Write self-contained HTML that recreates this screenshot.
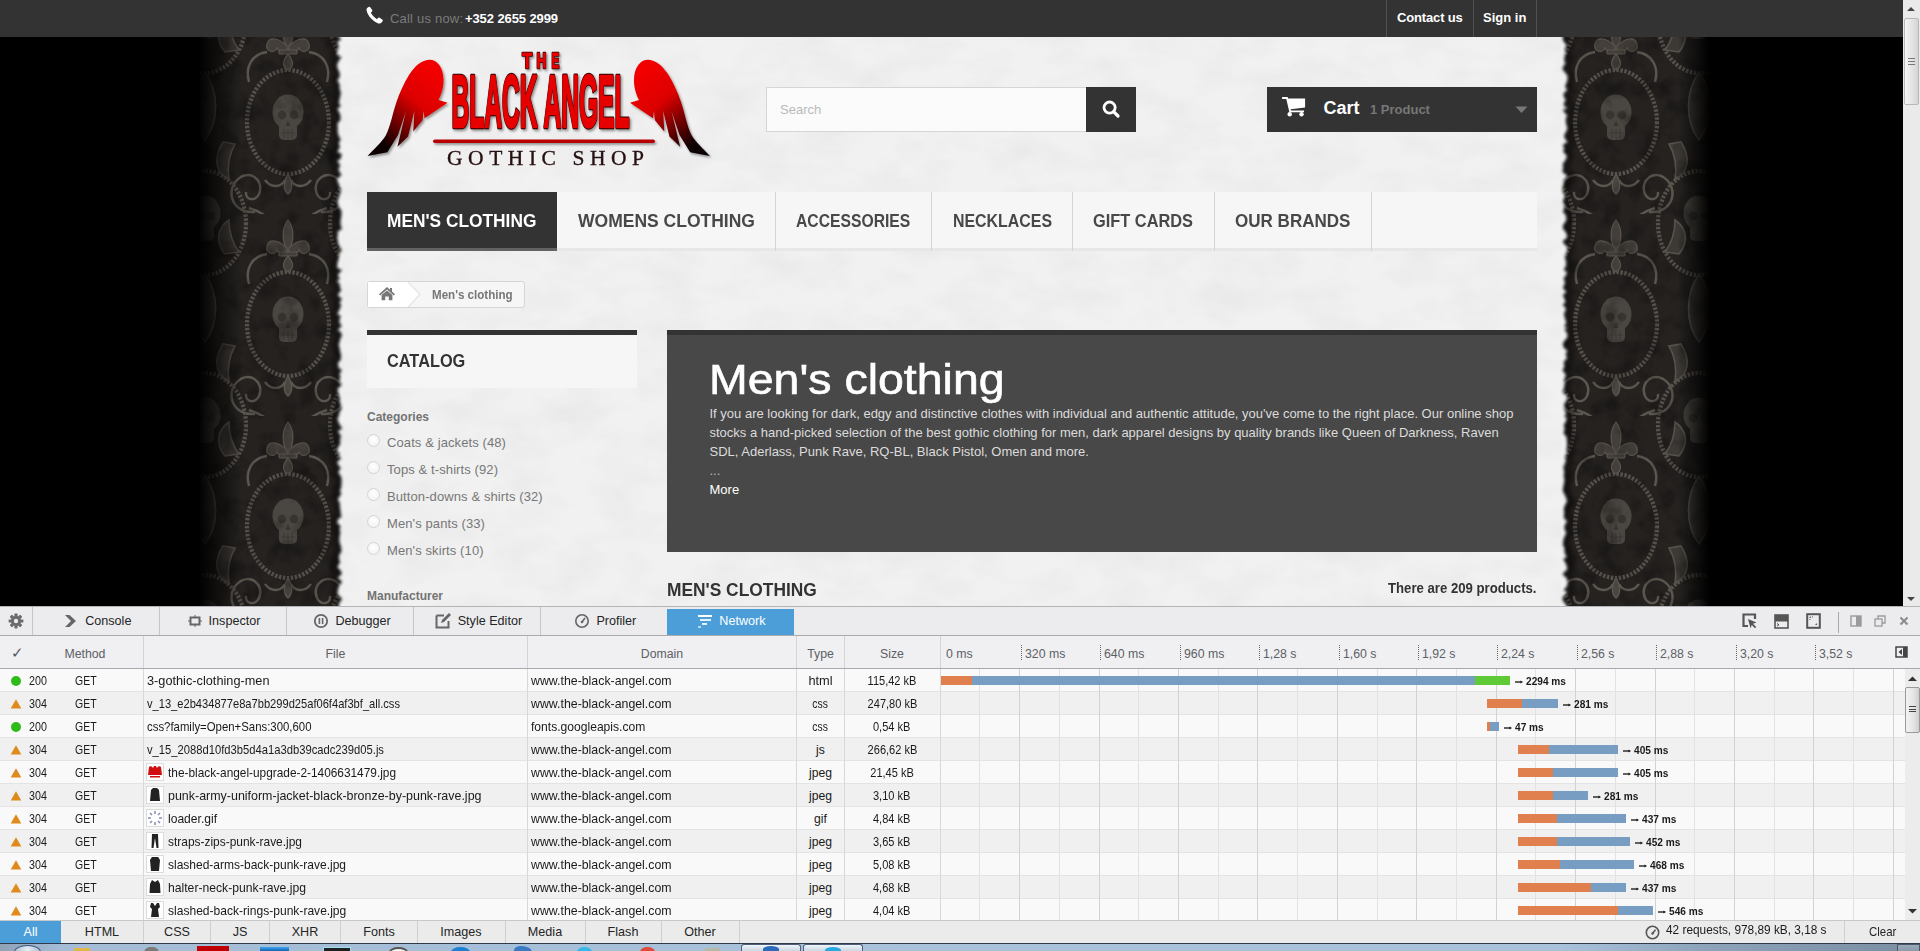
<!DOCTYPE html>
<html><head><meta charset="utf-8">
<style>
*{box-sizing:border-box;margin:0;padding:0}
html,body{width:1920px;height:951px;overflow:hidden;background:#000;font-family:"Liberation Sans",sans-serif}
.a{position:absolute;white-space:nowrap}
.l1{line-height:1}
.sx{display:inline-block;transform-origin:0 50%}
#page{position:absolute;left:0;top:0;width:1903px;height:606px;overflow:hidden;background:#000}
#topbar{position:absolute;left:0;top:0;width:1903px;height:37px;background:#333}
#topbar .sep{position:absolute;top:0;width:1px;height:37px;background:#515151}
#scroll1{position:absolute;left:1903px;top:0;width:17px;height:606px;background:#eaeaea}
#dev{position:absolute;left:0;top:607px;width:1920px;height:336px;background:#fcfcfc;overflow:hidden}
#taskbar{position:absolute;left:0;top:943px;width:1920px;height:8px;overflow:hidden}
.menu{position:absolute;top:192px;height:58px;background:#f6f6f6;border-bottom:3px solid #e9e9e9}
.mi{position:absolute;top:0;height:58px;border-right:1px solid #d6d4d4}
.mi span{position:absolute;top:14px;font-size:18px;font-weight:bold;color:#484848;line-height:18px}
.cat{position:absolute;left:387px;font-size:13px;color:#777;line-height:13px}
.radio{position:absolute;left:368px;width:12px;height:12px;border-radius:50%;background:#fafafa;border:1px solid #d8d8d8}
.desc{position:absolute;left:709px;font-size:13px;color:#d9d9d9;line-height:13px}
/* devtools */
.tb{position:absolute;top:0;height:29px;border-right:1px solid #cfcfcf;font-size:12.5px;color:#222;line-height:29px}
.hdr{position:absolute;font-size:12.5px;color:#5c6166;line-height:12px}
.row{position:absolute;left:0;width:1905px;height:23px;border-bottom:1px solid #e2e2e2}
.row.odd{background:#fafafa}
.row.even{background:#f0f0f0}
.t{position:absolute;font-size:12.5px;color:#1a1a1a;line-height:12px;top:6px}
.ft{position:absolute;top:0;height:22px;border-right:1px solid #d0d0d0;font-size:12.5px;color:#222;line-height:22px;text-align:center}

</style></head>
<body>
<div id="page"><svg class="a" style="left:0;top:0" width="1903" height="607" viewBox="0 0 1903 607">
<defs>
 <pattern id="dam" x="39" y="12" width="166" height="202" patternUnits="userSpaceOnUse">
  <rect width="166" height="202" fill="#252220"/>
  
<g id="mot">
 <!-- fleur-de-lis on top of ring -->
 <g fill="#443f3a" stroke="#58534c" stroke-width="1.2">
  <path d="M83 6 C77 14 76 26 83 38 C90 26 89 14 83 6 Z"/>
  <path d="M82 34 C74 26 64 24 62 32 C60 40 70 42 72 36 C74 40 78 40 82 38 Z"/>
  <path d="M84 34 C92 26 102 24 104 32 C106 40 96 42 94 36 C92 40 88 40 84 38 Z"/>
  <rect x="74" y="38" width="18" height="4" rx="1"/>
  <path d="M83 42 C78 48 76 54 83 58 C90 54 88 48 83 42 Z"/>
 </g>
 <!-- side scrolls -->
 <g fill="none" stroke="#5b564f" stroke-width="2.4">
  <path d="M50 200 C28 202 20 180 32 168 C44 156 60 168 54 182 C50 190 40 188 41 180"/>
  <path d="M116 200 C138 202 146 180 134 168 C122 156 106 168 112 182 C116 190 126 188 125 180"/>
  <path d="M60 206 C50 218 50 232 62 240 M106 206 C116 218 116 232 104 240"/>
  <path d="M62 40 C46 42 40 56 44 70 M104 40 C120 42 126 56 122 70"/>
  <path d="M44 196 C56 200 68 206 76 222 M122 196 C110 200 98 206 90 222" />
  <path d="M60 168 C66 176 76 176 80 168 M106 168 C100 176 90 176 86 168"/>
 </g>
 <!-- acanthus leaves between columns -->
 <g fill="#3d3935" stroke="#57524b" stroke-width="1.6">
  <path d="M0 60 C-14 80 -14 110 0 128 C14 110 14 80 0 60 Z"/>
  <path d="M166 60 C152 80 152 110 166 128 C180 110 180 80 166 60 Z"/>
  <path d="M0 262 C-14 282 -14 312 0 330 C14 312 14 282 0 262 Z" transform="translate(0,-202)"/>
  <path d="M18 130 C8 146 10 160 24 168 C22 154 24 142 30 132 Z"/>
  <path d="M148 130 C158 146 156 160 142 168 C144 154 142 142 136 132 Z"/>
  <path d="M20 40 C10 28 12 14 24 6 C24 20 28 30 34 38 Z"/>
  <path d="M146 40 C156 28 154 14 142 6 C142 20 138 30 132 38 Z"/>
 </g>
 <!-- rope rings -->
 <g fill="none" stroke="#56514b" stroke-width="4.2" stroke-dasharray="2.4 1.6">
  <ellipse cx="83" cy="110" rx="41" ry="52"/>
  <ellipse cx="0" cy="9" rx="41" ry="52"/><ellipse cx="166" cy="9" rx="41" ry="52"/>
  <ellipse cx="0" cy="211" rx="41" ry="52"/><ellipse cx="166" cy="211" rx="41" ry="52"/>
 </g>
 <g fill="#4a4640" stroke="#5f5a53" stroke-width="1.2">
  <path d="M83 162 C78 170 78 178 83 182 C88 178 88 170 83 162 Z"/>
 </g>
</g>
<g fill="#4a4641">
 <ellipse cx="83" cy="100" rx="15.5" ry="17.5"/><rect x="74" y="108" width="18" height="20" rx="5"/>
 <ellipse cx="0" cy="-1" rx="15.5" ry="17.5"/><rect x="-9" y="7" width="18" height="20" rx="5"/>
 <ellipse cx="166" cy="-1" rx="15.5" ry="17.5"/><rect x="157" y="7" width="18" height="20" rx="5"/>
 <ellipse cx="0" cy="201" rx="15.5" ry="17.5"/><rect x="-9" y="209" width="18" height="20" rx="5"/>
 <ellipse cx="166" cy="201" rx="15.5" ry="17.5"/><rect x="157" y="209" width="18" height="20" rx="5"/>
</g>
<g fill="#383531">
 <circle cx="77" cy="103" r="4.4"/><circle cx="89" cy="103" r="4.4"/><path d="M83 108 L80.5 114 H85.5 Z"/>
 <path d="M76 121 H90 M79 117 V127 M83 117 V127 M87 117 V127" stroke="#3a3733" stroke-width="1"/>
 <circle cx="-6" cy="2" r="4.4"/><circle cx="6" cy="2" r="4.4"/>
 <circle cx="160" cy="2" r="4.4"/><circle cx="172" cy="2" r="4.4"/>
 <circle cx="-6" cy="204" r="4.4"/><circle cx="6" cy="204" r="4.4"/>
 <circle cx="160" cy="204" r="4.4"/><circle cx="172" cy="204" r="4.4"/>
</g>

 </pattern>
 <linearGradient id="fl" x1="0" x2="1"><stop offset="0" stop-color="#000" stop-opacity="1"/><stop offset="1" stop-color="#000" stop-opacity="0"/></linearGradient>
 <linearGradient id="fr" x1="0" x2="1"><stop offset="0" stop-color="#000" stop-opacity="0"/><stop offset="1" stop-color="#000" stop-opacity="1"/></linearGradient>
 <filter id="blur1" x="-5%" y="-5%" width="110%" height="110%"><feGaussianBlur stdDeviation="1.6"/></filter>
 <filter id="blur2" x="-5%" y="-5%" width="110%" height="110%"><feGaussianBlur stdDeviation="2"/></filter>
 <filter id="grunge" x="0" y="0" width="100%" height="100%">
  <feTurbulence type="fractalNoise" baseFrequency="0.05" numOctaves="3" seed="11"/>
  <feColorMatrix values="0 0 0 0 0  0 0 0 0 0  0 0 0 0 0  0 0 0 -2.2 1.2"/>
 </filter>
 <filter id="tex" x="0" y="0" width="100%" height="100%">
  <feTurbulence type="fractalNoise" baseFrequency="0.02 0.035" numOctaves="4" seed="3"/>
  <feColorMatrix values="0 0 0 0 0  0 0 0 0 0  0 0 0 0 0  0 0 0 -1.6 1.05"/>
 </filter>
</defs>
<rect width="1903" height="607" fill="#000"/>
<rect x="180" y="0" width="170" height="607" fill="url(#dam)"/>
<rect x="1555" y="0" width="170" height="607" fill="url(#dam)"/>
<rect x="180" y="0" width="170" height="607" fill="#000" filter="url(#grunge)" opacity="0.35"/>
<rect x="1555" y="0" width="170" height="607" fill="#000" filter="url(#grunge)" opacity="0.35"/>
<rect x="178" y="0" width="22" height="607" fill="#000"/>
<rect x="198" y="0" width="44" height="607" fill="url(#fl)"/>
<rect x="1678" y="0" width="32" height="607" fill="url(#fr)"/>
<rect x="1710" y="0" width="30" height="607" fill="#000"/>
<polygon points="338.6,30 339.0,33 337.3,35 338.8,37 341.6,39 337.1,42 339.1,47 337.4,50 337.2,55 341.8,57 339.9,59 337.2,64 337.1,67 338.4,70 339.7,73 339.8,77 337.4,80 338.8,83 339.8,85 339.5,88 340.9,93 339.9,98 338.8,103 341.0,106 337.3,109 339.6,113 340.7,117 340.1,121 337.5,123 337.8,128 337.7,132 339.1,137 340.9,139 338.7,143 340.0,147 337.3,152 341.8,154 340.5,159 337.2,161 340.3,165 338.4,170 341.5,175 337.0,179 338.7,184 339.5,186 340.9,189 340.7,192 338.9,197 337.3,202 339.0,207 341.5,211 341.4,216 340.6,220 340.5,224 341.9,229 337.3,232 338.1,235 337.0,238 338.3,241 337.7,243 340.1,247 341.9,251 339.3,253 339.0,258 337.4,263 337.2,268 342.0,270 337.7,275 340.0,279 336.9,281 339.7,284 340.1,288 341.4,290 337.7,295 341.9,299 339.4,303 341.3,305 339.4,310 337.3,314 340.8,316 339.4,320 339.6,323 341.8,326 337.7,330 340.8,332 342.0,336 340.5,338 339.6,342 338.7,345 339.7,348 340.2,352 341.1,355 340.7,360 337.9,363 338.7,368 342.0,370 339.4,374 340.5,377 339.2,381 341.9,385 337.3,389 338.1,391 338.7,394 340.1,399 339.4,401 341.1,405 341.2,407 341.6,409 339.4,412 339.2,415 337.4,419 339.3,424 340.7,426 342.1,429 337.7,431 341.1,436 340.1,439 340.3,444 337.7,448 337.0,451 339.6,453 339.2,456 341.2,459 337.0,462 338.4,465 340.9,468 338.2,472 341.2,477 341.6,479 341.6,483 341.2,488 339.7,491 341.4,493 340.1,496 337.8,499 340.1,504 339.8,506 340.4,510 341.0,515 341.5,517 338.2,519 337.1,523 339.5,525 340.9,527 339.2,529 340.5,532 339.5,537 339.5,542 340.5,545 341.7,549 341.3,552 339.1,555 339.2,560 340.4,562 337.3,567 341.0,571 341.8,574 337.6,578 341.9,581 340.8,584 339.0,586 337.7,591 337.7,594 342.1,599 338.7,604 338.8,607 340.7,609 338.7,611 339.2,616 338.9,618 339.6,620 1565.1,620 1562.9,619 1566.0,617 1565.1,612 1567.4,608 1565.8,604 1563.6,602 1562.4,599 1562.8,597 1567.3,592 1563.2,590 1566.5,587 1567.5,584 1567.2,579 1562.4,574 1567.4,569 1566.1,564 1563.1,559 1566.8,557 1564.6,553 1564.4,548 1562.9,545 1563.1,542 1563.8,538 1566.3,533 1564.4,529 1564.4,526 1567.0,521 1563.7,518 1564.1,514 1564.2,512 1563.7,509 1564.6,506 1567.1,501 1565.3,496 1562.8,491 1563.0,488 1564.0,483 1564.5,480 1563.7,476 1564.2,472 1563.3,467 1564.9,464 1565.8,460 1564.7,457 1567.3,452 1566.1,450 1567.1,447 1567.0,442 1566.5,437 1563.4,433 1564.7,429 1563.7,425 1565.7,422 1566.7,418 1563.9,416 1566.3,414 1564.3,409 1564.4,407 1563.7,405 1566.1,401 1567.3,398 1566.8,396 1562.4,392 1564.0,388 1564.6,383 1564.0,380 1565.9,375 1562.4,370 1564.4,367 1563.6,362 1567.0,358 1565.5,354 1567.4,351 1563.1,347 1562.8,345 1563.5,342 1567.6,337 1566.7,332 1563.9,330 1567.3,328 1564.0,326 1566.4,323 1564.8,318 1563.9,314 1566.0,309 1564.9,307 1562.5,305 1565.6,302 1564.1,298 1562.8,295 1566.4,292 1562.8,288 1565.0,283 1563.6,278 1566.2,275 1566.8,272 1563.7,270 1566.3,265 1565.8,263 1566.3,261 1564.8,259 1564.9,257 1565.7,254 1566.7,252 1567.4,247 1563.1,243 1562.8,241 1566.7,238 1567.1,236 1566.2,233 1562.6,228 1563.2,225 1566.4,220 1565.8,215 1562.8,212 1564.0,209 1564.4,205 1563.1,203 1562.9,201 1563.7,199 1565.0,196 1562.8,192 1562.4,187 1563.5,184 1563.7,180 1567.4,176 1562.4,172 1563.2,167 1562.6,164 1565.5,160 1566.9,156 1562.8,151 1564.6,149 1562.5,145 1567.5,142 1564.5,138 1564.2,135 1566.0,132 1567.4,128 1565.8,123 1565.8,118 1567.3,116 1565.1,113 1562.5,110 1567.6,108 1563.8,106 1563.9,103 1565.7,100 1563.4,96 1563.8,93 1567.3,90 1565.1,87 1565.6,85 1567.2,81 1567.6,76 1564.8,72 1562.7,70 1562.8,67 1565.7,63 1563.8,61 1564.6,59 1563.9,56 1566.0,54 1564.5,49 1566.7,45 1563.8,42 1562.6,39 1562.8,35 1567.5,33 1562.7,30" fill="none" stroke="#000" stroke-width="14" opacity="0.35" filter="url(#blur2)"/>
<polygon points="338.6,30 339.0,33 337.3,35 338.8,37 341.6,39 337.1,42 339.1,47 337.4,50 337.2,55 341.8,57 339.9,59 337.2,64 337.1,67 338.4,70 339.7,73 339.8,77 337.4,80 338.8,83 339.8,85 339.5,88 340.9,93 339.9,98 338.8,103 341.0,106 337.3,109 339.6,113 340.7,117 340.1,121 337.5,123 337.8,128 337.7,132 339.1,137 340.9,139 338.7,143 340.0,147 337.3,152 341.8,154 340.5,159 337.2,161 340.3,165 338.4,170 341.5,175 337.0,179 338.7,184 339.5,186 340.9,189 340.7,192 338.9,197 337.3,202 339.0,207 341.5,211 341.4,216 340.6,220 340.5,224 341.9,229 337.3,232 338.1,235 337.0,238 338.3,241 337.7,243 340.1,247 341.9,251 339.3,253 339.0,258 337.4,263 337.2,268 342.0,270 337.7,275 340.0,279 336.9,281 339.7,284 340.1,288 341.4,290 337.7,295 341.9,299 339.4,303 341.3,305 339.4,310 337.3,314 340.8,316 339.4,320 339.6,323 341.8,326 337.7,330 340.8,332 342.0,336 340.5,338 339.6,342 338.7,345 339.7,348 340.2,352 341.1,355 340.7,360 337.9,363 338.7,368 342.0,370 339.4,374 340.5,377 339.2,381 341.9,385 337.3,389 338.1,391 338.7,394 340.1,399 339.4,401 341.1,405 341.2,407 341.6,409 339.4,412 339.2,415 337.4,419 339.3,424 340.7,426 342.1,429 337.7,431 341.1,436 340.1,439 340.3,444 337.7,448 337.0,451 339.6,453 339.2,456 341.2,459 337.0,462 338.4,465 340.9,468 338.2,472 341.2,477 341.6,479 341.6,483 341.2,488 339.7,491 341.4,493 340.1,496 337.8,499 340.1,504 339.8,506 340.4,510 341.0,515 341.5,517 338.2,519 337.1,523 339.5,525 340.9,527 339.2,529 340.5,532 339.5,537 339.5,542 340.5,545 341.7,549 341.3,552 339.1,555 339.2,560 340.4,562 337.3,567 341.0,571 341.8,574 337.6,578 341.9,581 340.8,584 339.0,586 337.7,591 337.7,594 342.1,599 338.7,604 338.8,607 340.7,609 338.7,611 339.2,616 338.9,618 339.6,620 1565.1,620 1562.9,619 1566.0,617 1565.1,612 1567.4,608 1565.8,604 1563.6,602 1562.4,599 1562.8,597 1567.3,592 1563.2,590 1566.5,587 1567.5,584 1567.2,579 1562.4,574 1567.4,569 1566.1,564 1563.1,559 1566.8,557 1564.6,553 1564.4,548 1562.9,545 1563.1,542 1563.8,538 1566.3,533 1564.4,529 1564.4,526 1567.0,521 1563.7,518 1564.1,514 1564.2,512 1563.7,509 1564.6,506 1567.1,501 1565.3,496 1562.8,491 1563.0,488 1564.0,483 1564.5,480 1563.7,476 1564.2,472 1563.3,467 1564.9,464 1565.8,460 1564.7,457 1567.3,452 1566.1,450 1567.1,447 1567.0,442 1566.5,437 1563.4,433 1564.7,429 1563.7,425 1565.7,422 1566.7,418 1563.9,416 1566.3,414 1564.3,409 1564.4,407 1563.7,405 1566.1,401 1567.3,398 1566.8,396 1562.4,392 1564.0,388 1564.6,383 1564.0,380 1565.9,375 1562.4,370 1564.4,367 1563.6,362 1567.0,358 1565.5,354 1567.4,351 1563.1,347 1562.8,345 1563.5,342 1567.6,337 1566.7,332 1563.9,330 1567.3,328 1564.0,326 1566.4,323 1564.8,318 1563.9,314 1566.0,309 1564.9,307 1562.5,305 1565.6,302 1564.1,298 1562.8,295 1566.4,292 1562.8,288 1565.0,283 1563.6,278 1566.2,275 1566.8,272 1563.7,270 1566.3,265 1565.8,263 1566.3,261 1564.8,259 1564.9,257 1565.7,254 1566.7,252 1567.4,247 1563.1,243 1562.8,241 1566.7,238 1567.1,236 1566.2,233 1562.6,228 1563.2,225 1566.4,220 1565.8,215 1562.8,212 1564.0,209 1564.4,205 1563.1,203 1562.9,201 1563.7,199 1565.0,196 1562.8,192 1562.4,187 1563.5,184 1563.7,180 1567.4,176 1562.4,172 1563.2,167 1562.6,164 1565.5,160 1566.9,156 1562.8,151 1564.6,149 1562.5,145 1567.5,142 1564.5,138 1564.2,135 1566.0,132 1567.4,128 1565.8,123 1565.8,118 1567.3,116 1565.1,113 1562.5,110 1567.6,108 1563.8,106 1563.9,103 1565.7,100 1563.4,96 1563.8,93 1567.3,90 1565.1,87 1565.6,85 1567.2,81 1567.6,76 1564.8,72 1562.7,70 1562.8,67 1565.7,63 1563.8,61 1564.6,59 1563.9,56 1566.0,54 1564.5,49 1566.7,45 1563.8,42 1562.6,39 1562.8,35 1567.5,33 1562.7,30" fill="#f1f1f1" filter="url(#blur1)"/>
<rect x="342" y="37" width="1219" height="569" fill="#000" filter="url(#tex)" opacity="0.032"/>
</svg><div id="topbar"><div class="sep" style="left:1386px"></div><div class="sep" style="left:1473px"></div><div class="sep" style="left:1536px"></div></div><svg class="a" style="left:365px;top:5px" width="20" height="20" viewBox="0 0 20 20">
<path d="M3.2 2.2 C2 2.8 1.3 4 1.6 5.6 C2.6 10.6 7.6 16.2 12.8 18.2 C14.4 18.8 15.8 18.3 16.8 17.2 L17.6 16.2 C18 15.6 17.8 15 17.2 14.6 L14.6 12.8 C14 12.4 13.3 12.6 12.9 13.1 L12 14.2 C9.4 12.8 7 10.2 5.8 7.6 L6.9 6.8 C7.4 6.4 7.5 5.7 7.2 5.1 L5.4 2.4 C5 1.9 4.3 1.7 3.8 2 Z" fill="#fff"/>
</svg><div class="a " style="left:390px;top:11.59px;font-size:13px;line-height:13px;color:#7b7b7b;font-weight:normal;letter-spacing:0.2px">Call us now:</div><div class="a " style="left:465px;top:11.59px;font-size:13px;line-height:13px;color:#fff;font-weight:bold;letter-spacing:-0.1px">+352 2655 2999</div><div class="a " style="left:1397px;top:10.99px;font-size:13px;line-height:13px;color:#fff;font-weight:bold;letter-spacing:-0.15px">Contact us</div><div class="a " style="left:1483px;top:10.99px;font-size:13px;line-height:13px;color:#fff;font-weight:bold;">Sign in</div><svg class="a" style="left:360px;top:45px" width="360" height="130" viewBox="0 0 360 130">
<defs>
 <linearGradient id="wg" x1="78" y1="22" x2="14" y2="98" gradientUnits="userSpaceOnUse">
  <stop offset="0" stop-color="#f20000"/><stop offset="0.35" stop-color="#dc0000"/><stop offset="0.72" stop-color="#4a0000"/><stop offset="0.9" stop-color="#080000"/>
 </linearGradient>
 <filter id="tsh" x="-10%" y="-10%" width="130%" height="130%"><feDropShadow dx="1.5" dy="1.8" stdDeviation="1.1" flood-color="#000" flood-opacity="0.4"/></filter>
 <path id="wing" d="M5.5 101.1 C12 94 20 87 24 80 C28.5 71 31 57 34.5 47 C37.5 38 42 28 47 20 C53 11 59 5.5 67 4.8 C75 4.5 81 12 81.5 24 C81.8 33 79 40 76.5 45 L85.5 47.8 L62.5 63.3 L61.6 55.7 L60.6 65.2 L51.2 76.5 L52.4 55.7 L46.1 81.6 L35.4 91.7 L43.9 56.4 L36 80 L25.3 97.3 Z"/>
</defs>
<g filter="url(#tsh)">
 <use href="#wing" transform="translate(2,10)" fill="url(#wg)"/>
 <use href="#wing" transform="translate(355.5,10) scale(-1,1)" fill="url(#wg)"/>
 <g font-family="Liberation Sans" font-weight="bold">
 <text x="162.3" y="22.6" font-size="21.5" fill="#e60000" stroke="#2a0000" stroke-width="2.6" stroke-linejoin="round" textLength="9.8" lengthAdjust="spacingAndGlyphs">T</text>
 <text x="176.6" y="22.6" font-size="21.5" fill="#e60000" stroke="#2a0000" stroke-width="2.6" stroke-linejoin="round" textLength="9.8" lengthAdjust="spacingAndGlyphs">H</text>
 <text x="191.5" y="22.6" font-size="21.5" fill="#e60000" stroke="#2a0000" stroke-width="2.6" stroke-linejoin="round" textLength="7.8" lengthAdjust="spacingAndGlyphs">E</text>
 <text x="162.3" y="22.6" font-size="21.5" fill="#e60000" stroke="#e60000" stroke-width="1.1" stroke-linejoin="round" textLength="9.8" lengthAdjust="spacingAndGlyphs">T</text>
 <text x="176.6" y="22.6" font-size="21.5" fill="#e60000" stroke="#e60000" stroke-width="1.1" stroke-linejoin="round" textLength="9.8" lengthAdjust="spacingAndGlyphs">H</text>
 <text x="191.5" y="22.6" font-size="21.5" fill="#e60000" stroke="#e60000" stroke-width="1.1" stroke-linejoin="round" textLength="7.8" lengthAdjust="spacingAndGlyphs">E</text>
 <text x="91.5" y="82" font-size="75" fill="#e60000" stroke="#2a0000" stroke-width="4.6" stroke-linejoin="round" textLength="178" lengthAdjust="spacingAndGlyphs">BLACK ANGEL</text>
 <text x="91.5" y="82" font-size="75" fill="#e60000" stroke="#e60000" stroke-width="2.6" stroke-linejoin="round" textLength="178" lengthAdjust="spacingAndGlyphs">BLACK ANGEL</text>
 </g>
 <rect x="73" y="94.5" width="222" height="3.6" rx="1.8" fill="#b80000"/>
</g>
<text x="87" y="120" font-family="Liberation Serif" font-size="21.5" fill="#261010" stroke="#261010" stroke-width="0.35" textLength="197" lengthAdjust="spacing">GOTHIC SHOP</text>
</svg>
<div class="a" style="left:766px;top:87px;width:320px;height:45px;background:#fbfbfb;border:1px solid #d6d4d4;border-right:0"></div><div class="a " style="left:780px;top:103.19px;font-size:13px;line-height:13px;color:#b9b9b9;font-weight:normal;">Search</div><div class="a" style="left:1086px;top:87px;width:50px;height:45px;background:#333;"></div><svg class="a" style="left:1101px;top:99px" width="20" height="20" viewBox="0 0 20 20">
<circle cx="8.6" cy="8.6" r="5.6" fill="none" stroke="#fff" stroke-width="2.8"/>
<path d="M12.6 12.6 L17 17" stroke="#fff" stroke-width="3.2" stroke-linecap="round"/>
</svg><div class="a" style="left:1267px;top:87px;width:270px;height:45px;background:#333;"></div><svg class="a" style="left:1281px;top:96px" width="26" height="22" viewBox="0 0 26 22">
<path d="M1.1 1 H6.6 L7.2 2.5 H24.1 V11.4 L9.6 13.2 L9.9 14.6 H23 V16.3 H8.4 L5.3 2.9 H1.1 Z" fill="#fff"/>
<circle cx="8.7" cy="18.3" r="2.2" fill="#fff"/><circle cx="20.5" cy="18.3" r="2.2" fill="#fff"/>
</svg><div class="a " style="left:1323.5px;top:98.56px;font-size:18px;line-height:18px;color:#fff;font-weight:bold;">Cart</div><div class="a " style="left:1370px;top:102.79px;font-size:13px;line-height:13px;color:#777;font-weight:bold;">1 Product</div><svg class="a" style="left:1515px;top:106px" width="13" height="8" viewBox="0 0 13 8"><path d="M0.5 0.5 H12.5 L6.5 7 Z" fill="#777"/></svg><div class="a" style="left:367px;top:192px;width:1170px;height:59px;background:#f6f6f6;border-bottom:3px solid #e7e7e7"></div><div class="a" style="left:367px;top:192px;width:190px;height:59px;background:#333;border-bottom:3px solid #626262"></div><div class="a" style="left:775px;top:192px;width:1px;height:59px;background:#d6d4d4;"></div><div class="a " style="left:578px;top:211.76px;font-size:18px;line-height:18px;color:#484848;font-weight:bold;"><span class="sx" style="transform:scaleX(0.9725)">WOMENS CLOTHING</span></div><div class="a" style="left:931px;top:192px;width:1px;height:59px;background:#d6d4d4;"></div><div class="a " style="left:796px;top:211.76px;font-size:18px;line-height:18px;color:#484848;font-weight:bold;"><span class="sx" style="transform:scaleX(0.8723)">ACCESSORIES</span></div><div class="a" style="left:1072px;top:192px;width:1px;height:59px;background:#d6d4d4;"></div><div class="a " style="left:953px;top:211.76px;font-size:18px;line-height:18px;color:#484848;font-weight:bold;"><span class="sx" style="transform:scaleX(0.8838)">NECKLACES</span></div><div class="a" style="left:1214px;top:192px;width:1px;height:59px;background:#d6d4d4;"></div><div class="a " style="left:1093.4px;top:211.76px;font-size:18px;line-height:18px;color:#484848;font-weight:bold;"><span class="sx" style="transform:scaleX(0.9091)">GIFT CARDS</span></div><div class="a" style="left:1371px;top:192px;width:1px;height:59px;background:#d6d4d4;"></div><div class="a " style="left:1235px;top:211.76px;font-size:18px;line-height:18px;color:#484848;font-weight:bold;"><span class="sx" style="transform:scaleX(0.9466)">OUR BRANDS</span></div><div class="a " style="left:387px;top:211.76px;font-size:18px;line-height:18px;color:#fff;font-weight:bold;"><span class="sx" style="transform:scaleX(0.9621)">MEN'S CLOTHING</span></div><div class="a" style="left:367px;top:281px;width:158px;height:27px;background:#f6f6f6;border:1px solid #d6d4d4;border-radius:3px"></div><svg class="a" style="left:368px;top:282px" width="60" height="25" viewBox="0 0 60 25">
<path d="M0 0 H40 L52 12.5 L40 25 H0 Z" fill="#fff"/>
<path d="M40 0 L52 12.5 L40 25" fill="none" stroke="#e4e4e4" stroke-width="1.2"/>
</svg><svg class="a" style="left:378px;top:286px" width="18" height="15" viewBox="0 0 18 15">
<path d="M9 1 L1 8.2 L2.2 9.4 L9 3.6 L15.8 9.4 L17 8.2 L14 5.6 V2 H12 V3.8 Z" fill="#777"/>
<path d="M3.6 9 L9 4.6 L14.4 9 V14.2 H10.8 V10.6 H7.2 V14.2 H3.6 Z" fill="#777"/>
</svg><div class="a " style="left:431.5px;top:289.24px;font-size:12px;line-height:12px;color:#777;font-weight:bold;"><span class="sx" style="transform:scaleX(0.9649)">Men's clothing</span></div><div class="a" style="left:367px;top:330px;width:270px;height:58px;background:#f6f6f6;border-top:5px solid #333"></div><div class="a " style="left:387px;top:351.56px;font-size:18px;line-height:18px;color:#333;font-weight:bold;"><span class="sx" style="transform:scaleX(0.9070)">CATALOG</span></div><div class="a " style="left:367px;top:411.44px;font-size:12px;line-height:12px;color:#737373;font-weight:bold;">Categories</div><div class="a" style="left:367px;top:433.6px;width:13px;height:13px;background:radial-gradient(circle at 50% 40%,#fff 0,#f4f4f4 70%);border:1px solid #d4d4d4;border-radius:50%"></div><div class="a " style="left:387px;top:435.59px;font-size:13px;line-height:13px;color:#777;font-weight:normal;letter-spacing:0.1px">Coats &amp; jackets (48)</div><div class="a" style="left:367px;top:460.6px;width:13px;height:13px;background:radial-gradient(circle at 50% 40%,#fff 0,#f4f4f4 70%);border:1px solid #d4d4d4;border-radius:50%"></div><div class="a " style="left:387px;top:462.59px;font-size:13px;line-height:13px;color:#777;font-weight:normal;letter-spacing:0.1px">Tops &amp; t-shirts (92)</div><div class="a" style="left:367px;top:487.6px;width:13px;height:13px;background:radial-gradient(circle at 50% 40%,#fff 0,#f4f4f4 70%);border:1px solid #d4d4d4;border-radius:50%"></div><div class="a " style="left:387px;top:489.59px;font-size:13px;line-height:13px;color:#777;font-weight:normal;letter-spacing:0.1px">Button-downs &amp; shirts (32)</div><div class="a" style="left:367px;top:514.6px;width:13px;height:13px;background:radial-gradient(circle at 50% 40%,#fff 0,#f4f4f4 70%);border:1px solid #d4d4d4;border-radius:50%"></div><div class="a " style="left:387px;top:516.59px;font-size:13px;line-height:13px;color:#777;font-weight:normal;letter-spacing:0.1px">Men's pants (33)</div><div class="a" style="left:367px;top:541.6px;width:13px;height:13px;background:radial-gradient(circle at 50% 40%,#fff 0,#f4f4f4 70%);border:1px solid #d4d4d4;border-radius:50%"></div><div class="a " style="left:387px;top:543.59px;font-size:13px;line-height:13px;color:#777;font-weight:normal;letter-spacing:0.1px">Men's skirts (10)</div><div class="a " style="left:367px;top:589.84px;font-size:12px;line-height:12px;color:#737373;font-weight:bold;">Manufacturer</div><div class="a" style="left:667px;top:330px;width:870px;height:222px;background:#484848;border-top:5px solid #333"></div><div class="a " style="left:708.8px;top:358.54px;font-size:42px;line-height:42px;color:#fff;font-weight:normal;-webkit-text-stroke:0.6px #fff"><span class="sx" style="transform:scaleX(1.1066)">Men's clothing</span></div><div class="a " style="left:709.5px;top:407.19px;font-size:13px;line-height:13px;color:#dcdcdc;font-weight:normal;">If you are looking for dark, edgy and distinctive clothes with individual and authentic attitude, you&#39;ve come to the right place. Our online shop</div><div class="a " style="left:709.5px;top:426.09px;font-size:13px;line-height:13px;color:#dcdcdc;font-weight:normal;">stocks a hand-picked selection of the best gothic clothing for men, dark apparel designs by quality brands like Queen of Darkness, Raven</div><div class="a " style="left:709.5px;top:444.99px;font-size:13px;line-height:13px;color:#dcdcdc;font-weight:normal;">SDL, Aderlass, Punk Rave, RQ-BL, Black Pistol, Omen and more.</div><div class="a " style="left:709.5px;top:463.99px;font-size:13px;line-height:13px;color:#bbb;font-weight:normal;">...</div><div class="a " style="left:709.5px;top:482.69px;font-size:13px;line-height:13px;color:#fff;font-weight:normal;">More</div><div class="a " style="left:667px;top:580.76px;font-size:18px;line-height:18px;color:#333;font-weight:bold;"><span class="sx" style="transform:scaleX(0.9647)">MEN'S CLOTHING</span></div><div class="a " style="left:1388px;top:581.15px;font-size:14px;line-height:14px;color:#333;font-weight:bold;"><span class="sx" style="transform:scaleX(0.9402)">There are 209 products.</span></div></div><div id="scroll1"></div><svg class="a" style="left:1906px;top:5px" width="10" height="7" viewBox="0 0 10 7"><path d="M1 6 L5 2 L9 6 Z" fill="#444"/></svg><div class="a" style="left:1904px;top:18px;width:15px;height:87px;background:linear-gradient(90deg,#f4f4f4,#e2e2e2 60%,#d4d4d4);border:1px solid #b8b8b8;border-radius:2px"></div><div class="a" style="left:1908px;top:58px;width:7px;height:7px;border-top:1px solid #777;border-bottom:1px solid #777"></div><div class="a" style="left:1908px;top:61px;width:7px;height:1px;background:#777"></div><svg class="a" style="left:1906px;top:596px" width="10" height="7" viewBox="0 0 10 7"><path d="M1 1 L5 5 L9 1 Z" fill="#444"/></svg><div id="dev"></div><div class="a" style="left:0px;top:607px;width:1920px;height:28px;background:#ececee;"></div><div class="a" style="left:0px;top:606px;width:1920px;height:1px;background:#b4b4b8;"></div><div class="a" style="left:0px;top:635px;width:1920px;height:1px;background:#aaaaaa;"></div><div class="a" style="left:0px;top:636px;width:1920px;height:32px;background:#f0f0f2;"></div><div class="a" style="left:0px;top:668px;width:1920px;height:1px;background:#a9a9a9;"></div><div class="a" style="left:667px;top:609px;width:127px;height:26px;background:#4c9ed9;"></div><div class="a" style="left:32px;top:607px;width:1px;height:28px;background:#c6c6c6;"></div><div class="a" style="left:159px;top:607px;width:1px;height:28px;background:#c6c6c6;"></div><div class="a" style="left:286px;top:607px;width:1px;height:28px;background:#c6c6c6;"></div><div class="a" style="left:413px;top:607px;width:1px;height:28px;background:#c6c6c6;"></div><div class="a" style="left:540px;top:607px;width:1px;height:28px;background:#c6c6c6;"></div><svg class="a" style="left:8px;top:613px" width="16" height="16" viewBox="0 0 16 16">
<g fill="#6b6b6b"><circle cx="8" cy="8" r="5"/>
<rect x="6.4" y="0.6" width="3.2" height="14.8" rx="0.6"/>
<rect x="6.4" y="0.6" width="3.2" height="14.8" rx="0.6" transform="rotate(45 8 8)"/>
<rect x="6.4" y="0.6" width="3.2" height="14.8" rx="0.6" transform="rotate(90 8 8)"/>
<rect x="6.4" y="0.6" width="3.2" height="14.8" rx="0.6" transform="rotate(135 8 8)"/>
</g><circle cx="8" cy="8" r="2.2" fill="#ebebeb"/></svg><svg class="a" style="left:64px;top:614px" width="13" height="14" viewBox="0 0 13 14"><path d="M1 1 H5.5 L12 7 L5.5 13 H1 L7 7 Z" fill="#666"/></svg><svg class="a" style="left:187px;top:613px" width="16" height="16" viewBox="0 0 16 16"><rect x="3.5" y="4.5" width="9" height="7" fill="none" stroke="#666" stroke-width="2"/><path d="M1 8 H3 M13 8 H15 M8 2 V4 M8 12 V14" stroke="#666" stroke-width="1"/></svg><svg class="a" style="left:313px;top:613px" width="16" height="16" viewBox="0 0 16 16"><circle cx="8" cy="8" r="6.2" fill="none" stroke="#666" stroke-width="1.8"/><rect x="5.6" y="5" width="1.6" height="6" fill="#666"/><rect x="8.8" y="5" width="1.6" height="6" fill="#666"/></svg><svg class="a" style="left:435px;top:612px" width="17" height="17" viewBox="0 0 17 17"><path d="M1.5 3.5 H9 M1.5 3.5 V15.5 H13.5 V9" fill="none" stroke="#666" stroke-width="2"/><path d="M6 11 L7 8 L14 1 L16 3 L9 10 Z" fill="#666"/></svg><svg class="a" style="left:574px;top:613px" width="16" height="16" viewBox="0 0 16 16"><circle cx="8" cy="8" r="6.2" fill="none" stroke="#666" stroke-width="1.6"/><path d="M8 9 L11 5" stroke="#666" stroke-width="1.6"/><circle cx="8" cy="9" r="1.3" fill="#666"/></svg><svg class="a" style="left:697px;top:613px" width="16" height="16" viewBox="0 0 16 16"><g fill="#fff"><rect x="1" y="2" width="14" height="2"/><rect x="3" y="6" width="11" height="2" opacity="0.85"/><rect x="5" y="10" width="5" height="2" opacity="0.85"/><rect x="1" y="13" width="3" height="2" opacity="0.6"/></g></svg><div class="a " style="left:85.2px;top:615.33px;font-size:12.6px;line-height:12.6px;color:#252525;font-weight:normal;">Console</div><div class="a " style="left:208.6px;top:615.33px;font-size:12.6px;line-height:12.6px;color:#252525;font-weight:normal;">Inspector</div><div class="a " style="left:335.4px;top:615.33px;font-size:12.6px;line-height:12.6px;color:#252525;font-weight:normal;">Debugger</div><div class="a " style="left:457.7px;top:615.33px;font-size:12.6px;line-height:12.6px;color:#252525;font-weight:normal;">Style Editor</div><div class="a " style="left:596.4px;top:615.33px;font-size:12.6px;line-height:12.6px;color:#252525;font-weight:normal;">Profiler</div><div class="a " style="left:719.3px;top:615.33px;font-size:12.6px;line-height:12.6px;color:#fff;font-weight:normal;">Network</div><svg class="a" style="left:1742px;top:613px" width="16" height="16" viewBox="0 0 16 16">
<path d="M6 13 H1.5 V1.5 H13 V6" fill="none" stroke="#555" stroke-width="2.2"/>
<path d="M6 6 L14.5 9.5 L11 10.8 L14.2 14 L13 15.2 L9.8 12 L8.5 15.3 Z" fill="#555"/></svg><svg class="a" style="left:1774px;top:614px" width="15" height="15" viewBox="0 0 15 15">
<rect x="1" y="1" width="13" height="13" fill="none" stroke="#555" stroke-width="1.6"/><rect x="1" y="1" width="13" height="6.5" fill="#555"/>
<path d="M3 9.5 L5 10.8 L3 12" fill="none" stroke="#555" stroke-width="1"/></svg><svg class="a" style="left:1806px;top:613px" width="15" height="16" viewBox="0 0 15 16">
<rect x="1.2" y="1.2" width="12.6" height="13.6" fill="none" stroke="#555" stroke-width="2"/>
<path d="M4 4 H8 M4 4 V8" stroke="#555" stroke-width="1" stroke-dasharray="1 1"/><path d="M11 12 L11 10 L9 12 Z" fill="#555"/></svg><div class="a" style="left:1838px;top:612px;width:1px;height:21px;background:#aaaaaa;"></div><svg class="a" style="left:1850px;top:615px" width="12" height="12" viewBox="0 0 12 12">
<rect x="1" y="1" width="10" height="10" fill="none" stroke="#9a9a9a" stroke-width="1.4"/><rect x="6" y="1" width="5" height="10" fill="#9a9a9a"/></svg><svg class="a" style="left:1874px;top:615px" width="12" height="12" viewBox="0 0 12 12">
<rect x="1" y="4" width="7" height="7" fill="none" stroke="#9a9a9a" stroke-width="1.3"/><path d="M4 4 V1 H11 V8 H8" fill="none" stroke="#9a9a9a" stroke-width="1.3"/></svg><svg class="a" style="left:1899px;top:616px" width="10" height="10" viewBox="0 0 10 10">
<path d="M1.5 1.5 L8.5 8.5 M8.5 1.5 L1.5 8.5" stroke="#8a8a8a" stroke-width="2"/></svg><div class="a " style="left:10.5px;top:645.72px;font-size:14.5px;line-height:14.5px;color:#555566;font-weight:normal;">&#10003;</div><div class="a " style="left:64.4px;top:647.59px;font-size:12.3px;line-height:12.3px;color:#5c6166;font-weight:normal;">Method</div><div class="a" style="left:135.5px;width:400px;text-align:center;top:647.59px;font-size:12.3px;line-height:12.3px;color:#5c6166;font-weight:normal;">File</div><div class="a" style="left:462px;width:400px;text-align:center;top:647.59px;font-size:12.3px;line-height:12.3px;color:#5c6166;font-weight:normal;">Domain</div><div class="a" style="left:620.5px;width:400px;text-align:center;top:647.59px;font-size:12.3px;line-height:12.3px;color:#5c6166;font-weight:normal;">Type</div><div class="a" style="left:692px;width:400px;text-align:center;top:647.59px;font-size:12.3px;line-height:12.3px;color:#5c6166;font-weight:normal;">Size</div><div class="a " style="left:946px;top:647.59px;font-size:12.3px;line-height:12.3px;color:#5c6166;font-weight:normal;">0 ms</div><div class="a" style="left:1020.9px;top:645px;width:1px;height:15px;background:repeating-linear-gradient(#666 0 1px,transparent 1px 2px)"></div><div class="a " style="left:1025px;top:647.59px;font-size:12.3px;line-height:12.3px;color:#5c6166;font-weight:normal;">320 ms</div><div class="a" style="left:1100.3px;top:645px;width:1px;height:15px;background:repeating-linear-gradient(#666 0 1px,transparent 1px 2px)"></div><div class="a " style="left:1104px;top:647.59px;font-size:12.3px;line-height:12.3px;color:#5c6166;font-weight:normal;">640 ms</div><div class="a" style="left:1179.8px;top:645px;width:1px;height:15px;background:repeating-linear-gradient(#666 0 1px,transparent 1px 2px)"></div><div class="a " style="left:1184px;top:647.59px;font-size:12.3px;line-height:12.3px;color:#5c6166;font-weight:normal;">960 ms</div><div class="a" style="left:1259.2px;top:645px;width:1px;height:15px;background:repeating-linear-gradient(#666 0 1px,transparent 1px 2px)"></div><div class="a " style="left:1263px;top:647.59px;font-size:12.3px;line-height:12.3px;color:#5c6166;font-weight:normal;">1,28 s</div><div class="a" style="left:1338.6px;top:645px;width:1px;height:15px;background:repeating-linear-gradient(#666 0 1px,transparent 1px 2px)"></div><div class="a " style="left:1343px;top:647.59px;font-size:12.3px;line-height:12.3px;color:#5c6166;font-weight:normal;">1,60 s</div><div class="a" style="left:1418.0px;top:645px;width:1px;height:15px;background:repeating-linear-gradient(#666 0 1px,transparent 1px 2px)"></div><div class="a " style="left:1422px;top:647.59px;font-size:12.3px;line-height:12.3px;color:#5c6166;font-weight:normal;">1,92 s</div><div class="a" style="left:1497.4px;top:645px;width:1px;height:15px;background:repeating-linear-gradient(#666 0 1px,transparent 1px 2px)"></div><div class="a " style="left:1501px;top:647.59px;font-size:12.3px;line-height:12.3px;color:#5c6166;font-weight:normal;">2,24 s</div><div class="a" style="left:1576.9px;top:645px;width:1px;height:15px;background:repeating-linear-gradient(#666 0 1px,transparent 1px 2px)"></div><div class="a " style="left:1581px;top:647.59px;font-size:12.3px;line-height:12.3px;color:#5c6166;font-weight:normal;">2,56 s</div><div class="a" style="left:1656.3px;top:645px;width:1px;height:15px;background:repeating-linear-gradient(#666 0 1px,transparent 1px 2px)"></div><div class="a " style="left:1660px;top:647.59px;font-size:12.3px;line-height:12.3px;color:#5c6166;font-weight:normal;">2,88 s</div><div class="a" style="left:1735.7px;top:645px;width:1px;height:15px;background:repeating-linear-gradient(#666 0 1px,transparent 1px 2px)"></div><div class="a " style="left:1740px;top:647.59px;font-size:12.3px;line-height:12.3px;color:#5c6166;font-weight:normal;">3,20 s</div><div class="a" style="left:1815.1px;top:645px;width:1px;height:15px;background:repeating-linear-gradient(#666 0 1px,transparent 1px 2px)"></div><div class="a " style="left:1819px;top:647.59px;font-size:12.3px;line-height:12.3px;color:#5c6166;font-weight:normal;">3,52 s</div><svg class="a" style="left:1895px;top:646px" width="13" height="12" viewBox="0 0 13 12">
<rect x="1" y="1" width="11" height="10" fill="none" stroke="#444" stroke-width="1.5"/><rect x="8" y="1" width="4" height="10" fill="#444"/><path d="M7 3 L3.5 6 L7 9 Z" fill="#444"/></svg><div class="a" style="left:143px;top:636px;width:1px;height:32px;background:#d4d4d8;"></div><div class="a" style="left:527px;top:636px;width:1px;height:32px;background:#d4d4d8;"></div><div class="a" style="left:796px;top:636px;width:1px;height:32px;background:#d4d4d8;"></div><div class="a" style="left:844px;top:636px;width:1px;height:32px;background:#d4d4d8;"></div><div class="a" style="left:940px;top:636px;width:1px;height:32px;background:#d4d4d8;"></div><div class="a" style="left:0px;top:669px;width:1905px;height:22px;background:#f9f9f9;"></div><div class="a" style="left:0px;top:691px;width:1905px;height:1px;background:#e3e3e3;"></div><div class="a" style="left:0px;top:692px;width:1905px;height:22px;background:#f0f0f0;"></div><div class="a" style="left:0px;top:714px;width:1905px;height:1px;background:#e3e3e3;"></div><div class="a" style="left:0px;top:715px;width:1905px;height:22px;background:#f9f9f9;"></div><div class="a" style="left:0px;top:737px;width:1905px;height:1px;background:#e3e3e3;"></div><div class="a" style="left:0px;top:738px;width:1905px;height:22px;background:#f0f0f0;"></div><div class="a" style="left:0px;top:760px;width:1905px;height:1px;background:#e3e3e3;"></div><div class="a" style="left:0px;top:761px;width:1905px;height:22px;background:#f9f9f9;"></div><div class="a" style="left:0px;top:783px;width:1905px;height:1px;background:#e3e3e3;"></div><div class="a" style="left:0px;top:784px;width:1905px;height:22px;background:#f0f0f0;"></div><div class="a" style="left:0px;top:806px;width:1905px;height:1px;background:#e3e3e3;"></div><div class="a" style="left:0px;top:807px;width:1905px;height:22px;background:#f9f9f9;"></div><div class="a" style="left:0px;top:829px;width:1905px;height:1px;background:#e3e3e3;"></div><div class="a" style="left:0px;top:830px;width:1905px;height:22px;background:#f0f0f0;"></div><div class="a" style="left:0px;top:852px;width:1905px;height:1px;background:#e3e3e3;"></div><div class="a" style="left:0px;top:853px;width:1905px;height:22px;background:#f9f9f9;"></div><div class="a" style="left:0px;top:875px;width:1905px;height:1px;background:#e3e3e3;"></div><div class="a" style="left:0px;top:876px;width:1905px;height:22px;background:#f0f0f0;"></div><div class="a" style="left:0px;top:898px;width:1905px;height:1px;background:#e3e3e3;"></div><div class="a" style="left:0px;top:899px;width:1905px;height:22px;background:#f9f9f9;"></div><div class="a" style="left:0px;top:921px;width:1905px;height:1px;background:#e3e3e3;"></div><div class="a" style="left:143px;top:669px;width:1px;height:252px;background:#d8d8d8;"></div><div class="a" style="left:527px;top:669px;width:1px;height:252px;background:#d8d8d8;"></div><div class="a" style="left:796px;top:669px;width:1px;height:252px;background:#d8d8d8;"></div><div class="a" style="left:844px;top:669px;width:1px;height:252px;background:#d8d8d8;"></div><div class="a" style="left:940px;top:669px;width:1px;height:252px;background:#d8d8d8;"></div><div class="a" style="left:979.4px;top:669px;width:1px;height:252px;background:#e2e2e2"></div><div class="a" style="left:1019.1px;top:669px;width:1px;height:252px;background:#d2d2d2"></div><div class="a" style="left:1058.8px;top:669px;width:1px;height:252px;background:#e2e2e2"></div><div class="a" style="left:1098.5px;top:669px;width:1px;height:252px;background:#d2d2d2"></div><div class="a" style="left:1138.2px;top:669px;width:1px;height:252px;background:#e2e2e2"></div><div class="a" style="left:1178.0px;top:669px;width:1px;height:252px;background:#d2d2d2"></div><div class="a" style="left:1217.7px;top:669px;width:1px;height:252px;background:#e2e2e2"></div><div class="a" style="left:1257.4px;top:669px;width:1px;height:252px;background:#d2d2d2"></div><div class="a" style="left:1297.1px;top:669px;width:1px;height:252px;background:#e2e2e2"></div><div class="a" style="left:1336.8px;top:669px;width:1px;height:252px;background:#d2d2d2"></div><div class="a" style="left:1376.5px;top:669px;width:1px;height:252px;background:#e2e2e2"></div><div class="a" style="left:1416.2px;top:669px;width:1px;height:252px;background:#d2d2d2"></div><div class="a" style="left:1455.9px;top:669px;width:1px;height:252px;background:#e2e2e2"></div><div class="a" style="left:1495.6px;top:669px;width:1px;height:252px;background:#d2d2d2"></div><div class="a" style="left:1535.3px;top:669px;width:1px;height:252px;background:#e2e2e2"></div><div class="a" style="left:1575.1px;top:669px;width:1px;height:252px;background:#d2d2d2"></div><div class="a" style="left:1614.8px;top:669px;width:1px;height:252px;background:#e2e2e2"></div><div class="a" style="left:1654.5px;top:669px;width:1px;height:252px;background:#d2d2d2"></div><div class="a" style="left:1694.2px;top:669px;width:1px;height:252px;background:#e2e2e2"></div><div class="a" style="left:1733.9px;top:669px;width:1px;height:252px;background:#d2d2d2"></div><div class="a" style="left:1773.6px;top:669px;width:1px;height:252px;background:#e2e2e2"></div><div class="a" style="left:1813.3px;top:669px;width:1px;height:252px;background:#d2d2d2"></div><div class="a" style="left:1853.0px;top:669px;width:1px;height:252px;background:#e2e2e2"></div><div class="a" style="left:1892.7px;top:669px;width:1px;height:252px;background:#d2d2d2"></div><div class="a" style="left:11px;top:676px;width:10px;height:10px;border-radius:50%;background:#2fbb1a"></div><div class="a " style="left:29px;top:675.27px;font-size:12.2px;line-height:12.2px;color:#1a1a1a;font-weight:normal;"><span class="sx" style="transform:scaleX(0.8800)">200</span></div><div class="a " style="left:74.5px;top:675.27px;font-size:12.2px;line-height:12.2px;color:#1a1a1a;font-weight:normal;"><span class="sx" style="transform:scaleX(0.8600)">GET</span></div><div class="a " style="left:147px;top:675.27px;font-size:12.2px;line-height:12.2px;color:#1a1a1a;font-weight:normal;"><span class="sx" style="transform:scaleX(1.0452)">3-gothic-clothing-men</span></div><div class="a " style="left:531px;top:675.27px;font-size:12.2px;line-height:12.2px;color:#1a1a1a;font-weight:normal;"><span class="sx" style="transform:scaleX(1.0125)">www.the-black-angel.com</span></div><div class="a" style="left:620.5px;width:400px;text-align:center;top:675.27px;font-size:12.2px;line-height:12.2px;color:#1a1a1a;font-weight:normal;"><span style="display:inline-block;transform-origin:50% 50%;transform:scaleX(1.0500)">html</span></div><div class="a" style="left:692px;width:400px;text-align:center;top:675.27px;font-size:12.2px;line-height:12.2px;color:#1a1a1a;font-weight:normal;"><span style="display:inline-block;transform-origin:50% 50%;transform:scaleX(0.9050)">115,42 kB</span></div><div class="a" style="left:941px;top:676px;width:31px;height:9px;background:#e0804f;"></div><div class="a" style="left:972px;top:676px;width:503px;height:9px;background:#779dc3;"></div><div class="a" style="left:1475px;top:676px;width:35px;height:9px;background:#5fca36;"></div><svg class="a" style="left:1515px;top:679px" width="8" height="6" viewBox="0 0 8 6"><path d="M0 3 H6" stroke="#111" stroke-width="1.3"/><path d="M5.5 1.5 L8 3 L5.5 4.5 Z" fill="#111"/></svg><div class="a " style="left:1526px;top:675.69px;font-size:11px;line-height:11px;color:#1a1a1a;font-weight:bold;"><span class="sx" style="transform:scaleX(0.9200)">2294 ms</span></div><svg class="a" style="left:10px;top:699px" width="12" height="10" viewBox="0 0 12 10"><path d="M6 0.3 L11.3 9.6 H0.7 Z" fill="#e08a1c"/></svg><div class="a " style="left:29px;top:698.27px;font-size:12.2px;line-height:12.2px;color:#1a1a1a;font-weight:normal;"><span class="sx" style="transform:scaleX(0.8800)">304</span></div><div class="a " style="left:74.5px;top:698.27px;font-size:12.2px;line-height:12.2px;color:#1a1a1a;font-weight:normal;"><span class="sx" style="transform:scaleX(0.8600)">GET</span></div><div class="a " style="left:147px;top:698.27px;font-size:12.2px;line-height:12.2px;color:#1a1a1a;font-weight:normal;"><span class="sx" style="transform:scaleX(0.9127)">v_13_e2b434877e8a7bb299d25af06f4af3bf_all.css</span></div><div class="a " style="left:531px;top:698.27px;font-size:12.2px;line-height:12.2px;color:#1a1a1a;font-weight:normal;"><span class="sx" style="transform:scaleX(1.0125)">www.the-black-angel.com</span></div><div class="a" style="left:620.5px;width:400px;text-align:center;top:698.27px;font-size:12.2px;line-height:12.2px;color:#1a1a1a;font-weight:normal;"><span style="display:inline-block;transform-origin:50% 50%;transform:scaleX(0.8500)">css</span></div><div class="a" style="left:692px;width:400px;text-align:center;top:698.27px;font-size:12.2px;line-height:12.2px;color:#1a1a1a;font-weight:normal;"><span style="display:inline-block;transform-origin:50% 50%;transform:scaleX(0.9050)">247,80 kB</span></div><div class="a" style="left:1486.5px;top:699px;width:35.0px;height:9px;background:#e0804f;"></div><div class="a" style="left:1521.5px;top:699px;width:36.0px;height:9px;background:#779dc3;"></div><svg class="a" style="left:1562.5px;top:702px" width="8" height="6" viewBox="0 0 8 6"><path d="M0 3 H6" stroke="#111" stroke-width="1.3"/><path d="M5.5 1.5 L8 3 L5.5 4.5 Z" fill="#111"/></svg><div class="a " style="left:1573.5px;top:698.69px;font-size:11px;line-height:11px;color:#1a1a1a;font-weight:bold;"><span class="sx" style="transform:scaleX(0.9200)">281 ms</span></div><div class="a" style="left:11px;top:722px;width:10px;height:10px;border-radius:50%;background:#2fbb1a"></div><div class="a " style="left:29px;top:721.27px;font-size:12.2px;line-height:12.2px;color:#1a1a1a;font-weight:normal;"><span class="sx" style="transform:scaleX(0.8800)">200</span></div><div class="a " style="left:74.5px;top:721.27px;font-size:12.2px;line-height:12.2px;color:#1a1a1a;font-weight:normal;"><span class="sx" style="transform:scaleX(0.8600)">GET</span></div><div class="a " style="left:147px;top:721.27px;font-size:12.2px;line-height:12.2px;color:#1a1a1a;font-weight:normal;"><span class="sx" style="transform:scaleX(0.9338)">css?family=Open+Sans:300,600</span></div><div class="a " style="left:531px;top:721.27px;font-size:12.2px;line-height:12.2px;color:#1a1a1a;font-weight:normal;"><span class="sx" style="transform:scaleX(0.9923)">fonts.googleapis.com</span></div><div class="a" style="left:620.5px;width:400px;text-align:center;top:721.27px;font-size:12.2px;line-height:12.2px;color:#1a1a1a;font-weight:normal;"><span style="display:inline-block;transform-origin:50% 50%;transform:scaleX(0.8500)">css</span></div><div class="a" style="left:692px;width:400px;text-align:center;top:721.27px;font-size:12.2px;line-height:12.2px;color:#1a1a1a;font-weight:normal;"><span style="display:inline-block;transform-origin:50% 50%;transform:scaleX(0.9050)">0,54 kB</span></div><div class="a" style="left:1486.5px;top:722px;width:3.5px;height:9px;background:#e0804f;"></div><div class="a" style="left:1490px;top:722px;width:8.5px;height:9px;background:#779dc3;"></div><svg class="a" style="left:1503.5px;top:725px" width="8" height="6" viewBox="0 0 8 6"><path d="M0 3 H6" stroke="#111" stroke-width="1.3"/><path d="M5.5 1.5 L8 3 L5.5 4.5 Z" fill="#111"/></svg><div class="a " style="left:1514.5px;top:721.69px;font-size:11px;line-height:11px;color:#1a1a1a;font-weight:bold;"><span class="sx" style="transform:scaleX(0.9200)">47 ms</span></div><svg class="a" style="left:10px;top:745px" width="12" height="10" viewBox="0 0 12 10"><path d="M6 0.3 L11.3 9.6 H0.7 Z" fill="#e08a1c"/></svg><div class="a " style="left:29px;top:744.27px;font-size:12.2px;line-height:12.2px;color:#1a1a1a;font-weight:normal;"><span class="sx" style="transform:scaleX(0.8800)">304</span></div><div class="a " style="left:74.5px;top:744.27px;font-size:12.2px;line-height:12.2px;color:#1a1a1a;font-weight:normal;"><span class="sx" style="transform:scaleX(0.8600)">GET</span></div><div class="a " style="left:147px;top:744.27px;font-size:12.2px;line-height:12.2px;color:#1a1a1a;font-weight:normal;"><span class="sx" style="transform:scaleX(0.9202)">v_15_2088d10fd3b5d4a1a3db39cadc239d05.js</span></div><div class="a " style="left:531px;top:744.27px;font-size:12.2px;line-height:12.2px;color:#1a1a1a;font-weight:normal;"><span class="sx" style="transform:scaleX(1.0125)">www.the-black-angel.com</span></div><div class="a" style="left:620.5px;width:400px;text-align:center;top:744.27px;font-size:12.2px;line-height:12.2px;color:#1a1a1a;font-weight:normal;"><span style="display:inline-block;transform-origin:50% 50%;transform:scaleX(1.0000)">js</span></div><div class="a" style="left:692px;width:400px;text-align:center;top:744.27px;font-size:12.2px;line-height:12.2px;color:#1a1a1a;font-weight:normal;"><span style="display:inline-block;transform-origin:50% 50%;transform:scaleX(0.9050)">266,62 kB</span></div><div class="a" style="left:1518px;top:745px;width:31px;height:9px;background:#e0804f;"></div><div class="a" style="left:1549px;top:745px;width:69px;height:9px;background:#779dc3;"></div><svg class="a" style="left:1623px;top:748px" width="8" height="6" viewBox="0 0 8 6"><path d="M0 3 H6" stroke="#111" stroke-width="1.3"/><path d="M5.5 1.5 L8 3 L5.5 4.5 Z" fill="#111"/></svg><div class="a " style="left:1634px;top:744.69px;font-size:11px;line-height:11px;color:#1a1a1a;font-weight:bold;"><span class="sx" style="transform:scaleX(0.9200)">405 ms</span></div><svg class="a" style="left:10px;top:768px" width="12" height="10" viewBox="0 0 12 10"><path d="M6 0.3 L11.3 9.6 H0.7 Z" fill="#e08a1c"/></svg><div class="a " style="left:29px;top:767.27px;font-size:12.2px;line-height:12.2px;color:#1a1a1a;font-weight:normal;"><span class="sx" style="transform:scaleX(0.8800)">304</span></div><div class="a " style="left:74.5px;top:767.27px;font-size:12.2px;line-height:12.2px;color:#1a1a1a;font-weight:normal;"><span class="sx" style="transform:scaleX(0.8600)">GET</span></div><svg class="a" style="left:146px;top:763px" width="18" height="18" viewBox="0 0 18 18"><rect x="0.5" y="0.5" width="17" height="17" fill="#fff" stroke="#dcdcdc"/><path d="M3 4 C4 3 6 3 7 5 L8 3 H10 L11 5 C12 3 14 3 15 4 L16 12 H2 Z" fill="#d01010"/><rect x="4" y="13" width="10" height="1.5" fill="#d01010"/></svg><div class="a " style="left:167.5px;top:767.27px;font-size:12.2px;line-height:12.2px;color:#1a1a1a;font-weight:normal;"><span class="sx" style="transform:scaleX(0.9725)">the-black-angel-upgrade-2-1406631479.jpg</span></div><div class="a " style="left:531px;top:767.27px;font-size:12.2px;line-height:12.2px;color:#1a1a1a;font-weight:normal;"><span class="sx" style="transform:scaleX(1.0125)">www.the-black-angel.com</span></div><div class="a" style="left:620.5px;width:400px;text-align:center;top:767.27px;font-size:12.2px;line-height:12.2px;color:#1a1a1a;font-weight:normal;"><span style="display:inline-block;transform-origin:50% 50%;transform:scaleX(1.0000)">jpeg</span></div><div class="a" style="left:692px;width:400px;text-align:center;top:767.27px;font-size:12.2px;line-height:12.2px;color:#1a1a1a;font-weight:normal;"><span style="display:inline-block;transform-origin:50% 50%;transform:scaleX(0.9050)">21,45 kB</span></div><div class="a" style="left:1518px;top:768px;width:35px;height:9px;background:#e0804f;"></div><div class="a" style="left:1553px;top:768px;width:65px;height:9px;background:#779dc3;"></div><svg class="a" style="left:1623px;top:771px" width="8" height="6" viewBox="0 0 8 6"><path d="M0 3 H6" stroke="#111" stroke-width="1.3"/><path d="M5.5 1.5 L8 3 L5.5 4.5 Z" fill="#111"/></svg><div class="a " style="left:1634px;top:767.69px;font-size:11px;line-height:11px;color:#1a1a1a;font-weight:bold;"><span class="sx" style="transform:scaleX(0.9200)">405 ms</span></div><svg class="a" style="left:10px;top:791px" width="12" height="10" viewBox="0 0 12 10"><path d="M6 0.3 L11.3 9.6 H0.7 Z" fill="#e08a1c"/></svg><div class="a " style="left:29px;top:790.27px;font-size:12.2px;line-height:12.2px;color:#1a1a1a;font-weight:normal;"><span class="sx" style="transform:scaleX(0.8800)">304</span></div><div class="a " style="left:74.5px;top:790.27px;font-size:12.2px;line-height:12.2px;color:#1a1a1a;font-weight:normal;"><span class="sx" style="transform:scaleX(0.8600)">GET</span></div><svg class="a" style="left:146px;top:786px" width="18" height="18" viewBox="0 0 18 18"><rect x="0.5" y="0.5" width="17" height="17" fill="#fff" stroke="#dcdcdc"/><path d="M7 2 H11 L13 4 L14 15 H4 L5 4 Z" fill="#222"/></svg><div class="a " style="left:167.5px;top:790.27px;font-size:12.2px;line-height:12.2px;color:#1a1a1a;font-weight:normal;"><span class="sx" style="transform:scaleX(1.0217)">punk-army-uniform-jacket-black-bronze-by-punk-rave.jpg</span></div><div class="a " style="left:531px;top:790.27px;font-size:12.2px;line-height:12.2px;color:#1a1a1a;font-weight:normal;"><span class="sx" style="transform:scaleX(1.0125)">www.the-black-angel.com</span></div><div class="a" style="left:620.5px;width:400px;text-align:center;top:790.27px;font-size:12.2px;line-height:12.2px;color:#1a1a1a;font-weight:normal;"><span style="display:inline-block;transform-origin:50% 50%;transform:scaleX(1.0000)">jpeg</span></div><div class="a" style="left:692px;width:400px;text-align:center;top:790.27px;font-size:12.2px;line-height:12.2px;color:#1a1a1a;font-weight:normal;"><span style="display:inline-block;transform-origin:50% 50%;transform:scaleX(0.9050)">3,10 kB</span></div><div class="a" style="left:1518px;top:791px;width:35px;height:9px;background:#e0804f;"></div><div class="a" style="left:1553px;top:791px;width:34.5px;height:9px;background:#779dc3;"></div><svg class="a" style="left:1592.5px;top:794px" width="8" height="6" viewBox="0 0 8 6"><path d="M0 3 H6" stroke="#111" stroke-width="1.3"/><path d="M5.5 1.5 L8 3 L5.5 4.5 Z" fill="#111"/></svg><div class="a " style="left:1603.5px;top:790.69px;font-size:11px;line-height:11px;color:#1a1a1a;font-weight:bold;"><span class="sx" style="transform:scaleX(0.9200)">281 ms</span></div><svg class="a" style="left:10px;top:814px" width="12" height="10" viewBox="0 0 12 10"><path d="M6 0.3 L11.3 9.6 H0.7 Z" fill="#e08a1c"/></svg><div class="a " style="left:29px;top:813.27px;font-size:12.2px;line-height:12.2px;color:#1a1a1a;font-weight:normal;"><span class="sx" style="transform:scaleX(0.8800)">304</span></div><div class="a " style="left:74.5px;top:813.27px;font-size:12.2px;line-height:12.2px;color:#1a1a1a;font-weight:normal;"><span class="sx" style="transform:scaleX(0.8600)">GET</span></div><svg class="a" style="left:146px;top:809px" width="18" height="18" viewBox="0 0 18 18"><rect x="0.5" y="0.5" width="17" height="17" fill="#fff" stroke="#dcdcdc"/><g stroke="#8a8fb8" stroke-width="1.6"><path d="M9 2 V5 M9 13 V16 M2 9 H5 M13 9 H16 M4 4 L6 6 M12 12 L14 14 M14 4 L12 6 M4 14 L6 12"/></g></svg><div class="a " style="left:167.5px;top:813.27px;font-size:12.2px;line-height:12.2px;color:#1a1a1a;font-weight:normal;"><span class="sx" style="transform:scaleX(0.9905)">loader.gif</span></div><div class="a " style="left:531px;top:813.27px;font-size:12.2px;line-height:12.2px;color:#1a1a1a;font-weight:normal;"><span class="sx" style="transform:scaleX(1.0125)">www.the-black-angel.com</span></div><div class="a" style="left:620.5px;width:400px;text-align:center;top:813.27px;font-size:12.2px;line-height:12.2px;color:#1a1a1a;font-weight:normal;"><span style="display:inline-block;transform-origin:50% 50%;transform:scaleX(1.0000)">gif</span></div><div class="a" style="left:692px;width:400px;text-align:center;top:813.27px;font-size:12.2px;line-height:12.2px;color:#1a1a1a;font-weight:normal;"><span style="display:inline-block;transform-origin:50% 50%;transform:scaleX(0.9050)">4,84 kB</span></div><div class="a" style="left:1518px;top:814px;width:38.5px;height:9px;background:#e0804f;"></div><div class="a" style="left:1556.5px;top:814px;width:69.5px;height:9px;background:#779dc3;"></div><svg class="a" style="left:1631px;top:817px" width="8" height="6" viewBox="0 0 8 6"><path d="M0 3 H6" stroke="#111" stroke-width="1.3"/><path d="M5.5 1.5 L8 3 L5.5 4.5 Z" fill="#111"/></svg><div class="a " style="left:1642px;top:813.69px;font-size:11px;line-height:11px;color:#1a1a1a;font-weight:bold;"><span class="sx" style="transform:scaleX(0.9200)">437 ms</span></div><svg class="a" style="left:10px;top:837px" width="12" height="10" viewBox="0 0 12 10"><path d="M6 0.3 L11.3 9.6 H0.7 Z" fill="#e08a1c"/></svg><div class="a " style="left:29px;top:836.27px;font-size:12.2px;line-height:12.2px;color:#1a1a1a;font-weight:normal;"><span class="sx" style="transform:scaleX(0.8800)">304</span></div><div class="a " style="left:74.5px;top:836.27px;font-size:12.2px;line-height:12.2px;color:#1a1a1a;font-weight:normal;"><span class="sx" style="transform:scaleX(0.8600)">GET</span></div><svg class="a" style="left:146px;top:832px" width="18" height="18" viewBox="0 0 18 18"><rect x="0.5" y="0.5" width="17" height="17" fill="#fff" stroke="#dcdcdc"/><path d="M6 2 H12 L12.5 16 H10.5 L9 6 L7.5 16 H5.5 Z" fill="#222"/></svg><div class="a " style="left:167.5px;top:836.27px;font-size:12.2px;line-height:12.2px;color:#1a1a1a;font-weight:normal;"><span class="sx" style="transform:scaleX(0.9793)">straps-zips-punk-rave.jpg</span></div><div class="a " style="left:531px;top:836.27px;font-size:12.2px;line-height:12.2px;color:#1a1a1a;font-weight:normal;"><span class="sx" style="transform:scaleX(1.0125)">www.the-black-angel.com</span></div><div class="a" style="left:620.5px;width:400px;text-align:center;top:836.27px;font-size:12.2px;line-height:12.2px;color:#1a1a1a;font-weight:normal;"><span style="display:inline-block;transform-origin:50% 50%;transform:scaleX(1.0000)">jpeg</span></div><div class="a" style="left:692px;width:400px;text-align:center;top:836.27px;font-size:12.2px;line-height:12.2px;color:#1a1a1a;font-weight:normal;"><span style="display:inline-block;transform-origin:50% 50%;transform:scaleX(0.9050)">3,65 kB</span></div><div class="a" style="left:1518px;top:837px;width:38.5px;height:9px;background:#e0804f;"></div><div class="a" style="left:1556.5px;top:837px;width:73.5px;height:9px;background:#779dc3;"></div><svg class="a" style="left:1635px;top:840px" width="8" height="6" viewBox="0 0 8 6"><path d="M0 3 H6" stroke="#111" stroke-width="1.3"/><path d="M5.5 1.5 L8 3 L5.5 4.5 Z" fill="#111"/></svg><div class="a " style="left:1646px;top:836.69px;font-size:11px;line-height:11px;color:#1a1a1a;font-weight:bold;"><span class="sx" style="transform:scaleX(0.9200)">452 ms</span></div><svg class="a" style="left:10px;top:860px" width="12" height="10" viewBox="0 0 12 10"><path d="M6 0.3 L11.3 9.6 H0.7 Z" fill="#e08a1c"/></svg><div class="a " style="left:29px;top:859.27px;font-size:12.2px;line-height:12.2px;color:#1a1a1a;font-weight:normal;"><span class="sx" style="transform:scaleX(0.8800)">304</span></div><div class="a " style="left:74.5px;top:859.27px;font-size:12.2px;line-height:12.2px;color:#1a1a1a;font-weight:normal;"><span class="sx" style="transform:scaleX(0.8600)">GET</span></div><svg class="a" style="left:146px;top:855px" width="18" height="18" viewBox="0 0 18 18"><rect x="0.5" y="0.5" width="17" height="17" fill="#fff" stroke="#dcdcdc"/><path d="M6 2 H12 L14 5 L13 16 H5 L4 5 Z" fill="#222"/></svg><div class="a " style="left:167.5px;top:859.27px;font-size:12.2px;line-height:12.2px;color:#1a1a1a;font-weight:normal;"><span class="sx" style="transform:scaleX(0.9842)">slashed-arms-back-punk-rave.jpg</span></div><div class="a " style="left:531px;top:859.27px;font-size:12.2px;line-height:12.2px;color:#1a1a1a;font-weight:normal;"><span class="sx" style="transform:scaleX(1.0125)">www.the-black-angel.com</span></div><div class="a" style="left:620.5px;width:400px;text-align:center;top:859.27px;font-size:12.2px;line-height:12.2px;color:#1a1a1a;font-weight:normal;"><span style="display:inline-block;transform-origin:50% 50%;transform:scaleX(1.0000)">jpeg</span></div><div class="a" style="left:692px;width:400px;text-align:center;top:859.27px;font-size:12.2px;line-height:12.2px;color:#1a1a1a;font-weight:normal;"><span style="display:inline-block;transform-origin:50% 50%;transform:scaleX(0.9050)">5,08 kB</span></div><div class="a" style="left:1518px;top:860px;width:42px;height:9px;background:#e0804f;"></div><div class="a" style="left:1560px;top:860px;width:74px;height:9px;background:#779dc3;"></div><svg class="a" style="left:1639px;top:863px" width="8" height="6" viewBox="0 0 8 6"><path d="M0 3 H6" stroke="#111" stroke-width="1.3"/><path d="M5.5 1.5 L8 3 L5.5 4.5 Z" fill="#111"/></svg><div class="a " style="left:1650px;top:859.69px;font-size:11px;line-height:11px;color:#1a1a1a;font-weight:bold;"><span class="sx" style="transform:scaleX(0.9200)">468 ms</span></div><svg class="a" style="left:10px;top:883px" width="12" height="10" viewBox="0 0 12 10"><path d="M6 0.3 L11.3 9.6 H0.7 Z" fill="#e08a1c"/></svg><div class="a " style="left:29px;top:882.27px;font-size:12.2px;line-height:12.2px;color:#1a1a1a;font-weight:normal;"><span class="sx" style="transform:scaleX(0.8800)">304</span></div><div class="a " style="left:74.5px;top:882.27px;font-size:12.2px;line-height:12.2px;color:#1a1a1a;font-weight:normal;"><span class="sx" style="transform:scaleX(0.8600)">GET</span></div><svg class="a" style="left:146px;top:878px" width="18" height="18" viewBox="0 0 18 18"><rect x="0.5" y="0.5" width="17" height="17" fill="#fff" stroke="#dcdcdc"/><path d="M6 2 L9 4 L12 2 L14 6 L14.5 15 H3.5 L4 6 Z" fill="#222"/></svg><div class="a " style="left:167.5px;top:882.27px;font-size:12.2px;line-height:12.2px;color:#1a1a1a;font-weight:normal;"><span class="sx" style="transform:scaleX(0.9985)">halter-neck-punk-rave.jpg</span></div><div class="a " style="left:531px;top:882.27px;font-size:12.2px;line-height:12.2px;color:#1a1a1a;font-weight:normal;"><span class="sx" style="transform:scaleX(1.0125)">www.the-black-angel.com</span></div><div class="a" style="left:620.5px;width:400px;text-align:center;top:882.27px;font-size:12.2px;line-height:12.2px;color:#1a1a1a;font-weight:normal;"><span style="display:inline-block;transform-origin:50% 50%;transform:scaleX(1.0000)">jpeg</span></div><div class="a" style="left:692px;width:400px;text-align:center;top:882.27px;font-size:12.2px;line-height:12.2px;color:#1a1a1a;font-weight:normal;"><span style="display:inline-block;transform-origin:50% 50%;transform:scaleX(0.9050)">4,68 kB</span></div><div class="a" style="left:1518px;top:883px;width:73px;height:9px;background:#e0804f;"></div><div class="a" style="left:1591px;top:883px;width:35px;height:9px;background:#779dc3;"></div><svg class="a" style="left:1631px;top:886px" width="8" height="6" viewBox="0 0 8 6"><path d="M0 3 H6" stroke="#111" stroke-width="1.3"/><path d="M5.5 1.5 L8 3 L5.5 4.5 Z" fill="#111"/></svg><div class="a " style="left:1642px;top:882.69px;font-size:11px;line-height:11px;color:#1a1a1a;font-weight:bold;"><span class="sx" style="transform:scaleX(0.9200)">437 ms</span></div><svg class="a" style="left:10px;top:906px" width="12" height="10" viewBox="0 0 12 10"><path d="M6 0.3 L11.3 9.6 H0.7 Z" fill="#e08a1c"/></svg><div class="a " style="left:29px;top:905.27px;font-size:12.2px;line-height:12.2px;color:#1a1a1a;font-weight:normal;"><span class="sx" style="transform:scaleX(0.8800)">304</span></div><div class="a " style="left:74.5px;top:905.27px;font-size:12.2px;line-height:12.2px;color:#1a1a1a;font-weight:normal;"><span class="sx" style="transform:scaleX(0.8600)">GET</span></div><svg class="a" style="left:146px;top:901px" width="18" height="18" viewBox="0 0 18 18"><rect x="0.5" y="0.5" width="17" height="17" fill="#fff" stroke="#dcdcdc"/><path d="M5 2 L7 2 L9 5 L11 2 L13 2 L14 6 L12 8 L13 16 H5 L6 8 L4 6 Z" fill="#222"/></svg><div class="a " style="left:167.5px;top:905.27px;font-size:12.2px;line-height:12.2px;color:#1a1a1a;font-weight:normal;"><span class="sx" style="transform:scaleX(0.9894)">slashed-back-rings-punk-rave.jpg</span></div><div class="a " style="left:531px;top:905.27px;font-size:12.2px;line-height:12.2px;color:#1a1a1a;font-weight:normal;"><span class="sx" style="transform:scaleX(1.0125)">www.the-black-angel.com</span></div><div class="a" style="left:620.5px;width:400px;text-align:center;top:905.27px;font-size:12.2px;line-height:12.2px;color:#1a1a1a;font-weight:normal;"><span style="display:inline-block;transform-origin:50% 50%;transform:scaleX(1.0000)">jpeg</span></div><div class="a" style="left:692px;width:400px;text-align:center;top:905.27px;font-size:12.2px;line-height:12.2px;color:#1a1a1a;font-weight:normal;"><span style="display:inline-block;transform-origin:50% 50%;transform:scaleX(0.9050)">4,04 kB</span></div><div class="a" style="left:1518px;top:906px;width:100px;height:9px;background:#e0804f;"></div><div class="a" style="left:1618px;top:906px;width:35px;height:9px;background:#779dc3;"></div><svg class="a" style="left:1658px;top:909px" width="8" height="6" viewBox="0 0 8 6"><path d="M0 3 H6" stroke="#111" stroke-width="1.3"/><path d="M5.5 1.5 L8 3 L5.5 4.5 Z" fill="#111"/></svg><div class="a " style="left:1669px;top:905.69px;font-size:11px;line-height:11px;color:#1a1a1a;font-weight:bold;"><span class="sx" style="transform:scaleX(0.9200)">546 ms</span></div><div class="a" style="left:1905px;top:669px;width:15px;height:252px;background:#ececec;"></div><svg class="a" style="left:1907px;top:675px" width="11" height="7" viewBox="0 0 11 7"><path d="M1 6 L5.5 1.5 L10 6 Z" fill="#333"/></svg><div class="a" style="left:1905px;top:687px;width:15px;height:46px;background:linear-gradient(90deg,#f2f2f2,#e6e6e6 55%,#cfcfcf);border:1px solid #9a9a9a;border-radius:2px"></div><div class="a" style="left:1909px;top:706px;width:7px;height:6px;border-top:1px solid #444;border-bottom:1px solid #444"></div><div class="a" style="left:1909px;top:708.5px;width:7px;height:1px;background:#444"></div><svg class="a" style="left:1907px;top:908px" width="11" height="7" viewBox="0 0 11 7"><path d="M1 1 L5.5 5.5 L10 1 Z" fill="#333"/></svg><div class="a" style="left:0px;top:920px;width:1920px;height:1px;background:#c8c8c8;"></div><div class="a" style="left:0px;top:921px;width:1920px;height:22px;background:#ebebeb;"></div><div class="a" style="left:0px;top:921px;width:61px;height:22px;background:#4c9ed9;"></div><div class="a" style="left:143px;top:921px;width:1px;height:22px;background:#cfcfcf;"></div><div class="a" style="left:210px;top:921px;width:1px;height:22px;background:#cfcfcf;"></div><div class="a" style="left:269px;top:921px;width:1px;height:22px;background:#cfcfcf;"></div><div class="a" style="left:340px;top:921px;width:1px;height:22px;background:#cfcfcf;"></div><div class="a" style="left:417px;top:921px;width:1px;height:22px;background:#cfcfcf;"></div><div class="a" style="left:505px;top:921px;width:1px;height:22px;background:#cfcfcf;"></div><div class="a" style="left:585px;top:921px;width:1px;height:22px;background:#cfcfcf;"></div><div class="a" style="left:661px;top:921px;width:1px;height:22px;background:#cfcfcf;"></div><div class="a" style="left:739px;top:921px;width:1px;height:22px;background:#cfcfcf;"></div><div class="a" style="left:1844px;top:921px;width:1px;height:22px;background:#cfcfcf;"></div><div class="a" style="left:-169.5px;width:400px;text-align:center;top:926.33px;font-size:12.6px;line-height:12.6px;color:#fff;font-weight:normal;">All</div><div class="a" style="left:-98px;width:400px;text-align:center;top:926.33px;font-size:12.6px;line-height:12.6px;color:#252525;font-weight:normal;">HTML</div><div class="a" style="left:-23px;width:400px;text-align:center;top:926.33px;font-size:12.6px;line-height:12.6px;color:#252525;font-weight:normal;">CSS</div><div class="a" style="left:40px;width:400px;text-align:center;top:926.33px;font-size:12.6px;line-height:12.6px;color:#252525;font-weight:normal;">JS</div><div class="a" style="left:105px;width:400px;text-align:center;top:926.33px;font-size:12.6px;line-height:12.6px;color:#252525;font-weight:normal;">XHR</div><div class="a" style="left:179px;width:400px;text-align:center;top:926.33px;font-size:12.6px;line-height:12.6px;color:#252525;font-weight:normal;">Fonts</div><div class="a" style="left:261px;width:400px;text-align:center;top:926.33px;font-size:12.6px;line-height:12.6px;color:#252525;font-weight:normal;">Images</div><div class="a" style="left:345px;width:400px;text-align:center;top:926.33px;font-size:12.6px;line-height:12.6px;color:#252525;font-weight:normal;">Media</div><div class="a" style="left:423px;width:400px;text-align:center;top:926.33px;font-size:12.6px;line-height:12.6px;color:#252525;font-weight:normal;">Flash</div><div class="a" style="left:500px;width:400px;text-align:center;top:926.33px;font-size:12.6px;line-height:12.6px;color:#252525;font-weight:normal;">Other</div><svg class="a" style="left:1645px;top:925px" width="15" height="15" viewBox="0 0 15 15"><circle cx="7.5" cy="7.5" r="6.2" fill="none" stroke="#555" stroke-width="1.6"/><path d="M7.5 8.5 L10.5 4.8" stroke="#555" stroke-width="1.5"/><circle cx="7.5" cy="8.5" r="1.2" fill="#555"/></svg><div class="a " style="left:1666.3px;top:923.90px;font-size:12.4px;line-height:12.4px;color:#1a1a1a;font-weight:normal;"><span class="sx" style="transform:scaleX(0.9550)">42 requests, 978,89 kB, 3,18 s</span></div><div class="a " style="left:1869px;top:925.67px;font-size:12.2px;line-height:12.2px;color:#252525;font-weight:normal;"><span class="sx" style="transform:scaleX(0.9400)">Clear</span></div><div id="taskbar">
<div class="a" style="left:0;top:0;width:1920px;height:1px;background:#2e3a48"></div>
<div class="a" style="left:0;top:1px;width:1920px;height:7px;background:linear-gradient(90deg,#8fa2b6 0,#a4bcd6 60px,#a9c2dc 900px,#a9c2dc 1560px,#8ea4bb 1700px,#7b8fa5 1900px)"></div>
<div class="a" style="left:14px;top:2px;width:27px;height:14px;border-radius:50%;background:radial-gradient(circle at 50% 30%,#e8eef4,#9fb4c8);border:1px solid #3a5a80"></div>
<div class="a" style="left:74px;top:5px;width:16px;height:4px;background:#e0b84a"></div>
<div class="a" style="left:144px;top:4px;width:15px;height:6px;border-radius:6px 6px 0 0;background:#7a7a7a"></div>
<div class="a" style="left:197px;top:3px;width:32px;height:5px;background:#c00000"></div>
<div class="a" style="left:260px;top:4px;width:29px;height:4px;background:linear-gradient(#38a8f0,#1a60b0)"></div>
<div class="a" style="left:323px;top:4px;width:28px;height:4px;background:#202020;border:1px solid #a0e0f0;border-bottom:0"></div>
<div class="a" style="left:389px;top:4px;width:19px;height:10px;border-radius:50%;background:#f4f4f4;border:2px solid #555"></div>
<div class="a" style="left:451px;top:4px;width:19px;height:10px;border-radius:50%;background:#1e80d0"></div>
<div class="a" style="left:514px;top:3px;width:18px;height:10px;border-radius:40% 60% 0 0;background:#3a7ac0"></div>
<div class="a" style="left:577px;top:4px;width:15px;height:10px;border-radius:50%;background:#38b8e8"></div>
<div class="a" style="left:640px;top:4px;width:15px;height:10px;border-radius:50%;background:#e04a38"></div>
<div class="a" style="left:705px;top:5px;width:15px;height:4px;background:#b8b8a8"></div>
<div class="a" style="left:741px;top:1px;width:60px;height:8px;background:linear-gradient(#f0f4f8,#c4d2e0);border:1px solid #50607a;border-bottom:0;border-radius:3px 3px 0 0"></div>
<div class="a" style="left:763px;top:3px;width:16px;height:6px;border-radius:50% 50% 0 0;background:#2a6ab8"></div>
<div class="a" style="left:803px;top:1px;width:60px;height:8px;background:linear-gradient(#f0f4f8,#c4d2e0);border:1px solid #50607a;border-bottom:0;border-radius:3px 3px 0 0"></div>
<div class="a" style="left:825px;top:4px;width:16px;height:6px;border-radius:50% 50% 0 0;background:#28a8e0"></div>
<div class="a" style="left:1897px;top:1px;width:23px;height:8px;background:linear-gradient(#9aaabb,#8797a8);border:1px solid #4a5868;border-bottom:0"></div>
</div>
</body></html>
